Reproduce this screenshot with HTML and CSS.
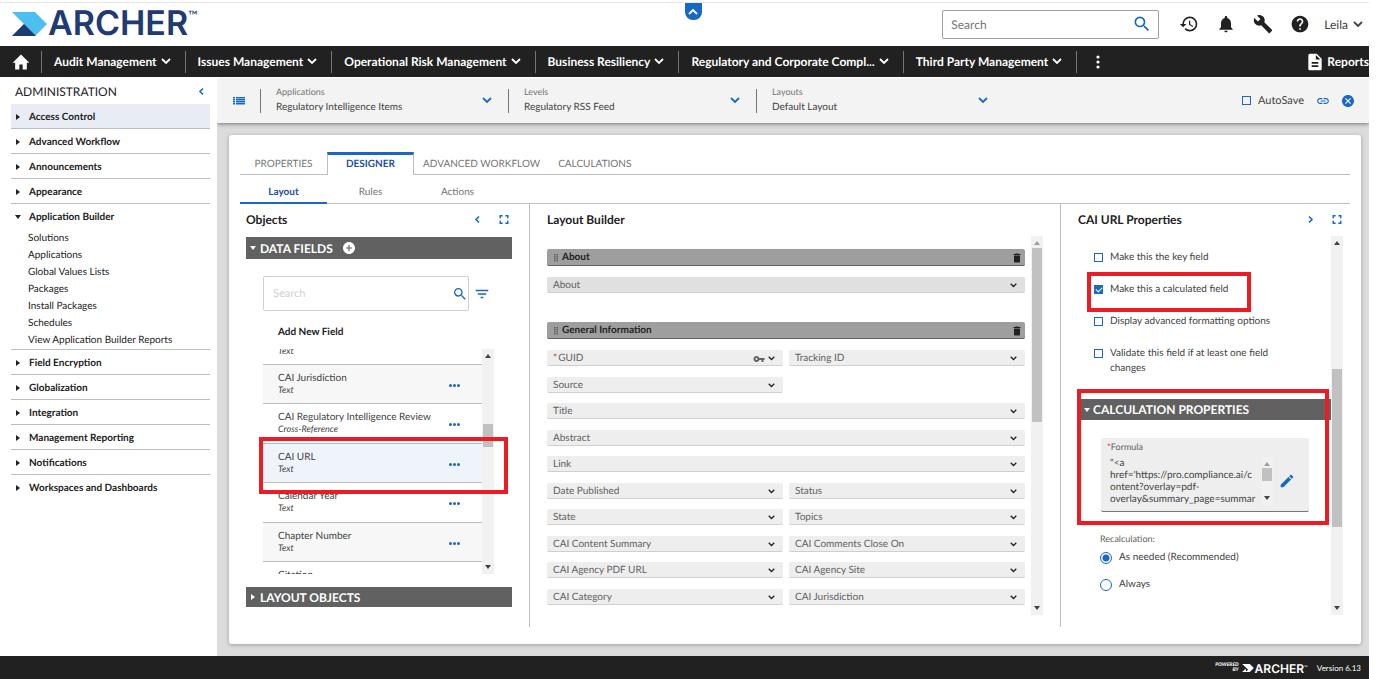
FILE: index.html
```html
<!DOCTYPE html>
<html lang="en">

<head>
    <meta charset="UTF-8">
    <meta name="viewport" content="width=device-width, initial-scale=1.0">
    <title>Archer - Application Builder</title>
    <link rel="stylesheet" href="styles.css">
</head>

<body>
    <!-- Icons -->
    <svg class="sprite" aria-hidden="true">
        <symbol id="home" viewBox="0 0 24 24"><path d="M10 21v-6h4v6h5v-8h3L12 3 2 13h3v8z"/></symbol>
        <symbol id="search" viewBox="0 0 24 24"><path d="M15.5 14h-.79l-.28-.27A6.471 6.471 0 0 0 16 9.5 6.5 6.5 0 1 0 9.5 16c1.61 0 3.09-.59 4.23-1.57l.27.28v.79l5 4.99L20.49 19l-4.99-5zm-6 0C7.01 14 5 11.99 5 9.5S7.01 5 9.5 5 14 7.01 14 9.5 11.99 14 9.5 14z"/></symbol>
        <symbol id="history" viewBox="0 0 24 24"><path d="M13 3a9 9 0 0 0-9 9H1l3.89 3.89.07.14L9 12H6c0-3.87 3.13-7 7-7s7 3.13 7 7-3.13 7-7 7c-1.93 0-3.68-.79-4.94-2.06l-1.42 1.42A8.954 8.954 0 0 0 13 21a9 9 0 0 0 0-18zm-1 5v5l4.28 2.54.72-1.21-3.5-2.08V8H12z"/></symbol>
        <symbol id="bell" viewBox="0 0 24 24"><path d="M12 22c1.1 0 2-.9 2-2h-4c0 1.1.89 2 2 2zm6-6v-5c0-3.07-1.64-5.64-4.5-6.32V4c0-.83-.67-1.5-1.5-1.5s-1.5.67-1.5 1.5v.68C7.63 5.36 6 7.92 6 11v5l-2 2v1h16v-1l-2-2z"/></symbol>
        <symbol id="wrench" viewBox="0 0 24 24"><path d="M22.7 19l-9.1-9.1c.9-2.3.4-5-1.5-6.9-2-2-5-2.4-7.4-1.3L9 6 6 9 1.6 4.7C.4 7.1.9 10.1 2.9 12.1c1.9 1.9 4.6 2.4 6.9 1.5l9.1 9.1c.4.4 1 .4 1.4 0l2.3-2.3c.5-.4.5-1.1.1-1.4z"/></symbol>
        <symbol id="help" viewBox="0 0 24 24"><path d="M12 2C6.48 2 2 6.48 2 12s4.48 10 10 10 10-4.48 10-10S17.52 2 12 2zm1 17h-2v-2h2v2zm2.07-7.75l-.9.92C13.45 12.9 13 13.5 13 15h-2v-.5c0-1.1.45-2.1 1.17-2.83l1.24-1.26c.37-.36.59-.86.59-1.41 0-1.1-.9-2-2-2s-2 .9-2 2H8c0-2.21 1.79-4 4-4s4 1.79 4 4c0 .88-.36 1.68-.93 2.25z"/></symbol>
        <symbol id="report" viewBox="0 0 24 24"><path d="M14 2H6c-1.1 0-1.99.9-1.99 2L4 20c0 1.1.89 2 1.99 2H18c1.1 0 2-.9 2-2V8l-6-6zm2 16H8v-2h8v2zm0-4H8v-2h8v2zm-3-5V3.5L18.5 9H13z"/></symbol>
        <symbol id="link" viewBox="0 0 24 24"><path d="M3.9 12c0-1.71 1.39-3.1 3.1-3.1h4V7H7c-2.76 0-5 2.24-5 5s2.24 5 5 5h4v-1.9H7c-1.71 0-3.1-1.39-3.1-3.1zM8 13h8v-2H8v2zm9-6h-4v1.9h4c1.71 0 3.1 1.39 3.1 3.1s-1.39 3.1-3.1 3.1h-4V17h4c2.76 0 5-2.24 5-5s-2.24-5-5-5z"/></symbol>
        <symbol id="close" viewBox="2 2 20 20"><path d="M12 2C6.47 2 2 6.47 2 12s4.47 10 10 10 10-4.47 10-10S17.53 2 12 2zm5 13.59L15.59 17 12 13.41 8.41 17 7 15.59 10.59 12 7 8.41 8.41 7 12 10.59 15.59 7 17 8.41 13.41 12 17 15.59z"/></symbol>
        <symbol id="add" viewBox="2 2 20 20"><path d="M12 2C6.48 2 2 6.48 2 12s4.48 10 10 10 10-4.48 10-10S17.52 2 12 2zm5 11h-4v4h-2v-4H7v-2h4V7h2v4h4v2z"/></symbol>
        <symbol id="key" viewBox="0 0 24 24"><path d="M12.65 10C11.83 7.67 9.61 6 7 6c-3.31 0-6 2.69-6 6s2.69 6 6 6c2.61 0 4.83-1.67 5.65-4H17v4h4v-4h2v-4H12.65zM7 14c-1.1 0-2-.9-2-2s.9-2 2-2 2 .9 2 2-.9 2-2 2z"/></symbol>
        <symbol id="trash" viewBox="4 2 16 20"><path d="M6 19c0 1.1.9 2 2 2h8c1.1 0 2-.9 2-2V7H6v12zM19 4h-3.5l-1-1h-5l-1 1H5v2h14V4z"/></symbol>
        <symbol id="edit" viewBox="2 2 20 20"><path d="M3 17.25V21h3.75L17.81 9.94l-3.75-3.75L3 17.25zM20.71 7.04c.39-.39.39-1.02 0-1.41l-2.34-2.34c-.39-.39-1.02-.39-1.41 0l-1.83 1.83 3.75 3.75 1.83-1.83z"/></symbol>
        <symbol id="filter" viewBox="2 2 20 20"><path d="M10 18h4v-2h-4v2zM3 6v2h18V6H3zm3 7h12v-2H6v2z"/></symbol>
        <symbol id="list" viewBox="0 0 12 9"><path d="M0 1h2v1.400H0zM3 1h9v1.400H3zM0 3h2v1.400H0zM3 3h9v1.400H3zM0 5h2v1.400H0zM3 5h9v1.400H3zM0 7h2v1.400H0zM3 7h9v1.400H3z"/></symbol>
        <symbol id="expand" viewBox="0 0 10 10"><path d="M0 0h3.500v1.600H1.600v1.900H0zM6.500 0H10v3.500H8.400V1.600H6.500zM0 6.500h1.600v1.900h1.900V10H0zM8.400 6.500H10V10H6.500V8.400h1.900z"/></symbol>
        <symbol id="down" viewBox="0 0 10 7"><path d="M1 1l4 4 4-4" fill="none" stroke="currentColor" stroke-width="1.800"/></symbol>
        <symbol id="up" viewBox="0 0 10 7"><path d="M1 6l4-4 4 4" fill="none" stroke="currentColor" stroke-width="1.800"/></symbol>
        <symbol id="left" viewBox="0 0 7 10"><path d="M5 2L2 5l3 3" fill="none" stroke="currentColor" stroke-width="1.600"/></symbol>
        <symbol id="right" viewBox="0 0 7 10"><path d="M2 2l3 3-3 3" fill="none" stroke="currentColor" stroke-width="1.600"/></symbol>
        <symbol id="tri-right" viewBox="0 0 4 6"><path d="M0 0l4 3-4 3z"/></symbol>
        <symbol id="tri-down" viewBox="0 0 6 4"><path d="M0 0h6L3 4z"/></symbol>
        <symbol id="tri-up" viewBox="0 0 6 4"><path d="M0 4h6L3 0z"/></symbol>
        <symbol id="dots" viewBox="0 0 11 3"><circle cx="1.500" cy="1.500" r="1.500"/><circle cx="5.500" cy="1.500" r="1.500"/><circle cx="9.500" cy="1.500" r="1.500"/></symbol>
        <symbol id="more" viewBox="0 0 4 14"><circle cx="2" cy="2" r="1.600"/><circle cx="2" cy="7" r="1.600"/><circle cx="2" cy="12" r="1.600"/></symbol>
        <symbol id="grip" viewBox="0 0 4 8"><path d="M0 0h1.500v1.500H0zM2.500 0H4v1.500H2.500zM0 2h1.500v1.500H0zM2.500 2H4v1.500H2.500zM0 4h1.500v1.500H0zM2.500 4H4v1.500H2.500zM0 6h1.500v1.500H0zM2.500 6H4v1.500H2.500z"/></symbol>
    </svg>

    <div class="app">
        <header class="header">
            <a href="#" class="logo" aria-label="Archer">
                <svg class="logo-mark" viewBox="0 0 35 24">
                    <path d="M0 0h23l12 12-12 12H0l12-12z" fill="#4dbfee"/>
                    <path d="M0 24l12-12 12 12z" fill="#203a72"/>
                </svg>
                <span class="logo-text">ARCHER</span><span class="logo-tm">™</span>
            </a>
            <button class="collapse-tab" aria-label="Collapse header"><svg class="chev"><use href="#up"/></svg></button>
            <div class="header-search">
                <input type="text" placeholder="Search" aria-label="Search">
                <button aria-label="Run search"><svg class="icon-20"><use href="#search"/></svg></button>
            </div>
            <div class="header-tools">
                <button aria-label="History"><svg class="icon-20"><use href="#history"/></svg></button>
                <button aria-label="Notifications"><svg class="icon-20"><use href="#bell"/></svg></button>
                <button aria-label="Administration"><svg class="icon-20"><use href="#wrench"/></svg></button>
                <button aria-label="Help"><svg class="icon-20"><use href="#help"/></svg></button>
            </div>
            <button class="user">Leila <svg class="chev"><use href="#down"/></svg></button>
        </header>

        <nav class="nav">
            <a href="#" class="nav-home" aria-label="Home"><svg class="icon-20"><use href="#home"/></svg></a>
            <button class="nav-item">Audit Management <svg class="chev"><use href="#down"/></svg></button>
            <button class="nav-item">Issues Management <svg class="chev"><use href="#down"/></svg></button>
            <button class="nav-item">Operational Risk Management <svg class="chev"><use href="#down"/></svg></button>
            <button class="nav-item">Business Resiliency <svg class="chev"><use href="#down"/></svg></button>
            <button class="nav-item">Regulatory and Corporate Compl... <svg class="chev"><use href="#down"/></svg></button>
            <button class="nav-item">Third Party Management <svg class="chev"><use href="#down"/></svg></button>
            <button class="nav-more" aria-label="More"><svg class="more"><use href="#more"/></svg></button>
            <a href="#" class="nav-reports"><svg class="icon-20"><use href="#report"/></svg>Reports</a>
        </nav>

        <div class="body">
            <aside class="sidebar">
                <div class="sidebar-title">
                    <span>ADMINISTRATION</span>
                    <button aria-label="Collapse menu"><svg class="side-chev"><use href="#left"/></svg></button>
                </div>
                <ul class="menu">
                    <li class="active"><a href="#"><svg><use href="#tri-right"/></svg>Access Control</a></li>
                    <li><a href="#"><svg><use href="#tri-right"/></svg>Advanced Workflow</a></li>
                    <li><a href="#"><svg><use href="#tri-right"/></svg>Announcements</a></li>
                    <li><a href="#"><svg><use href="#tri-right"/></svg>Appearance</a></li>
                    <li>
                        <a href="#"><svg><use href="#tri-down"/></svg>Application Builder</a>
                        <ul class="submenu">
                            <li><a href="#">Solutions</a></li>
                            <li><a href="#">Applications</a></li>
                            <li><a href="#">Global Values Lists</a></li>
                            <li><a href="#">Packages</a></li>
                            <li><a href="#">Install Packages</a></li>
                            <li><a href="#">Schedules</a></li>
                            <li><a href="#">View Application Builder Reports</a></li>
                        </ul>
                    </li>
                    <li><a href="#"><svg><use href="#tri-right"/></svg>Field Encryption</a></li>
                    <li><a href="#"><svg><use href="#tri-right"/></svg>Globalization</a></li>
                    <li><a href="#"><svg><use href="#tri-right"/></svg>Integration</a></li>
                    <li><a href="#"><svg><use href="#tri-right"/></svg>Management Reporting</a></li>
                    <li><a href="#"><svg><use href="#tri-right"/></svg>Notifications</a></li>
                    <li><a href="#"><svg><use href="#tri-right"/></svg>Workspaces and Dashboards</a></li>
                </ul>
            </aside>

            <main class="main">
                <div class="toolbar">
                    <button class="toolbar-list" aria-label="List"><svg class="list-icon"><use href="#list"/></svg></button>
                    <div class="picker">
                        <label for="applications">Applications</label>
                        <select id="applications"><option>Regulatory Intelligence Items</option></select>
                        <svg class="chev"><use href="#down"/></svg>
                    </div>
                    <div class="picker">
                        <label for="levels">Levels</label>
                        <select id="levels"><option>Regulatory RSS Feed</option></select>
                        <svg class="chev"><use href="#down"/></svg>
                    </div>
                    <div class="picker">
                        <label for="layouts">Layouts</label>
                        <select id="layouts"><option>Default Layout</option></select>
                        <svg class="chev"><use href="#down"/></svg>
                    </div>
                    <div class="toolbar-right">
                        <label class="autosave"><input type="checkbox">AutoSave</label>
                        <button aria-label="Copy link"><svg class="icon-14"><use href="#link"/></svg></button>
                        <button aria-label="Close"><svg class="icon-12"><use href="#close"/></svg></button>
                    </div>
                </div>

                <div class="card">
                    <div class="tabs">
                        <button>PROPERTIES</button>
                        <button class="selected">DESIGNER</button>
                        <button class="wide">ADVANCED WORKFLOW</button>
                        <button class="wide">CALCULATIONS</button>
                    </div>
                    <div class="subtabs">
                        <button class="selected">Layout</button>
                        <button>Rules</button>
                        <button>Actions</button>
                    </div>

                    <div class="columns">
                        <!-- Objects -->
                        <section class="objects">
                            <div class="panel-title">
                                <h2>Objects</h2>
                                <button aria-label="Collapse"><svg class="side-chev"><use href="#left"/></svg></button>
                                <button aria-label="Full screen"><svg class="expand"><use href="#expand"/></svg></button>
                            </div>
                            <div class="group-bar">
                                <svg class="tri-down"><use href="#tri-down"/></svg>DATA FIELDS
                                <button aria-label="Add field"><svg class="icon-12"><use href="#add"/></svg></button>
                            </div>
                            <div class="field-search">
                                <div class="field-search-box">
                                    <input type="text" placeholder="Search" aria-label="Search fields">
                                    <button aria-label="Search fields"><svg class="icon-16"><use href="#search"/></svg></button>
                                </div>
                                <button aria-label="Filter"><svg class="icon-14"><use href="#filter"/></svg></button>
                            </div>
                            <div class="add-field">Add New Field</div>
                            <div class="field-area">
                                <div class="field-window">
                                    <ul class="field-list">
                                        <li class="cut"><i>Text</i></li>
                                        <li class="odd"><div><b>CAI Jurisdiction</b><i>Text</i></div><button aria-label="Options"><svg class="dots"><use href="#dots"/></svg></button></li>
                                        <li><div><b>CAI Regulatory Intelligence Review</b><i>Cross-Reference</i></div><button aria-label="Options"><svg class="dots"><use href="#dots"/></svg></button></li>
                                        <li class="current"><div><b>CAI URL</b><i>Text</i></div><button aria-label="Options"><svg class="dots"><use href="#dots"/></svg></button></li>
                                        <li><div><b>Calendar Year</b><i>Text</i></div><button aria-label="Options"><svg class="dots"><use href="#dots"/></svg></button></li>
                                        <li class="odd"><div><b>Chapter Number</b><i>Text</i></div><button aria-label="Options"><svg class="dots"><use href="#dots"/></svg></button></li>
                                        <li><div><b>Citation</b></div></li>
                                    </ul>
                                </div>
                                <div class="scrollbar scroll-fields">
                                    <svg><use href="#tri-up"/></svg>
                                    <span class="thumb"></span>
                                    <svg><use href="#tri-down"/></svg>
                                </div>
                                <span class="mark mark-field"></span>
                            </div>
                            <div class="group-bar group-closed">
                                <svg class="tri-right"><use href="#tri-right"/></svg>LAYOUT OBJECTS
                            </div>
                        </section>

                        <!-- Layout Builder -->
                        <section class="builder">
                            <div class="panel-title"><h2>Layout Builder</h2></div>
                            <div class="builder-area">
                                <div class="builder-list">
                                    <div class="section-bar"><svg class="grip"><use href="#grip"/></svg>About<button aria-label="Delete section"><svg class="trash"><use href="#trash"/></svg></button></div>
                                    <div class="cells about-cells">
                                        <div class="cell full dark">About<button aria-label="Menu"><svg><use href="#down"/></svg></button></div>
                                    </div>
                                    <div class="section-bar"><svg class="grip"><use href="#grip"/></svg>General Information<button aria-label="Delete section"><svg class="trash"><use href="#trash"/></svg></button></div>
                                    <div class="cells general-cells">
                                        <div class="cell"><em>*</em>GUID<svg class="key"><use href="#key"/></svg><button aria-label="Menu"><svg><use href="#down"/></svg></button></div>
                                        <div class="cell">Tracking ID<button aria-label="Menu"><svg><use href="#down"/></svg></button></div>
                                        <div class="cell">Source<button aria-label="Menu"><svg><use href="#down"/></svg></button></div>
                                        <div class="cell full">Title<button aria-label="Menu"><svg><use href="#down"/></svg></button></div>
                                        <div class="cell full">Abstract<button aria-label="Menu"><svg><use href="#down"/></svg></button></div>
                                        <div class="cell full">Link<button aria-label="Menu"><svg><use href="#down"/></svg></button></div>
                                        <div class="cell">Date Published<button aria-label="Menu"><svg><use href="#down"/></svg></button></div>
                                        <div class="cell">Status<button aria-label="Menu"><svg><use href="#down"/></svg></button></div>
                                        <div class="cell">State<button aria-label="Menu"><svg><use href="#down"/></svg></button></div>
                                        <div class="cell">Topics<button aria-label="Menu"><svg><use href="#down"/></svg></button></div>
                                        <div class="cell">CAI Content Summary<button aria-label="Menu"><svg><use href="#down"/></svg></button></div>
                                        <div class="cell">CAI Comments Close On<button aria-label="Menu"><svg><use href="#down"/></svg></button></div>
                                        <div class="cell">CAI Agency PDF URL<button aria-label="Menu"><svg><use href="#down"/></svg></button></div>
                                        <div class="cell">CAI Agency Site<button aria-label="Menu"><svg><use href="#down"/></svg></button></div>
                                        <div class="cell">CAI Category<button aria-label="Menu"><svg><use href="#down"/></svg></button></div>
                                        <div class="cell">CAI Jurisdiction<button aria-label="Menu"><svg><use href="#down"/></svg></button></div>
                                    </div>
                                </div>
                                <div class="scrollbar scroll-builder">
                                    <svg class="off"><use href="#tri-up"/></svg>
                                    <span class="thumb"></span>
                                    <svg><use href="#tri-down"/></svg>
                                </div>
                            </div>
                        </section>

                        <!-- Properties -->
                        <section class="props">
                            <div class="panel-title">
                                <h2>CAI URL Properties</h2>
                                <button aria-label="Collapse"><svg class="side-chev"><use href="#right"/></svg></button>
                                <button aria-label="Full screen"><svg class="expand"><use href="#expand"/></svg></button>
                            </div>
                            <div class="props-area">
                                <div class="props-list">
                                    <div class="checks">
                                        <label><input type="checkbox"><span>Make this the key field</span></label>
                                        <label><input type="checkbox" checked><span>Make this a calculated field</span></label>
                                        <label><input type="checkbox"><span>Display advanced formatting options</span></label>
                                        <label><input type="checkbox"><span>Validate this field if at least one field changes</span></label>
                                        <span class="mark mark-check"></span>
                                    </div>
                                    <div class="calc">
                                        <div class="group-bar"><svg class="tri-down"><use href="#tri-down"/></svg>CALCULATION PROPERTIES</div>
                                        <div class="formula">
                                            <label for="formula"><em>*</em>Formula</label>
                                            <div class="formula-row">
                                                <textarea id="formula" rows="4">"&lt;a
href='https://pro.compliance.ai/c
ontent?overlay=pdf-
overlay&amp;summary_page=summar</textarea>
                                                <div class="scrollbar scroll-formula">
                                                    <svg class="off"><use href="#tri-up"/></svg>
                                                    <span class="thumb"></span>
                                                    <svg><use href="#tri-down"/></svg>
                                                </div>
                                                <button aria-label="Edit formula"><svg class="icon-14"><use href="#edit"/></svg></button>
                                            </div>
                                        </div>
                                        <span class="mark mark-calc"></span>
                                    </div>
                                    <fieldset class="recalc">
                                        <legend>Recalculation:</legend>
                                        <label><input type="radio" name="recalc" checked>As needed (Recommended)</label>
                                        <label><input type="radio" name="recalc">Always</label>
                                    </fieldset>
                                </div>
                                <div class="scrollbar scroll-props">
                                    <svg><use href="#tri-up"/></svg>
                                    <span class="thumb"></span>
                                    <svg><use href="#tri-down"/></svg>
                                </div>
                            </div>
                        </section>
                    </div>
                </div>
            </main>
        </div>

        <footer class="footer">
            <span class="powered">POWERED<br>BY</span>
            <svg class="footer-mark" viewBox="0 0 35 24"><path d="M0 0h23l12 12-12 12H10l8-7z" fill="#fff"/><path d="M0 24l10-10 3 10z" fill="#fff"/></svg>
            <span class="footer-logo">ARCHER</span><span class="footer-tm">™</span>
            <span class="version">Version 6.13</span>
        </footer>
    </div>
</body>

</html>
```

FILE: styles.css
```css
* {
    box-sizing: border-box;
}

body {
    margin: 0;
    background: #fff;
    color: #424242;
    font-family: Lato, "Liberation Sans", sans-serif;
    font-size: 10px;
    line-height: 15px;
    text-rendering: geometricPrecision;
}

button,
input,
select,
textarea {
    font: inherit;
    color: inherit;
    text-rendering: inherit;
    margin: 0;
    padding: 0;
    border: none;
    background: none;
}

button {
    cursor: pointer;
    display: flex;
    align-items: center;
}

a {
    color: inherit;
    text-decoration: none;
}

ul {
    list-style: none;
    margin: 0;
    padding: 0;
}

em {
    font-style: normal;
    color: #d32f2f;
}

svg {
    fill: currentColor;
    display: block;
    flex: none;
}

.sprite {
    position: absolute;
    width: 0;
    height: 0;
}

/* icon sizes */
.icon-20 {
    width: 20px;
    height: 20px;
}

.icon-16 {
    width: 16px;
    height: 16px;
}

.icon-14 {
    width: 14px;
    height: 14px;
}

.icon-12 {
    width: 12px;
    height: 12px;
}

.chev {
    width: 10px;
    height: 7px;
}

.side-chev {
    width: 7px;
    height: 11px;
}

.app {
    margin-right: 7px;
    min-height: 100vh;
    display: flex;
    flex-direction: column;
}

/* header */
.header {
    position: relative;
    height: 46px;
    padding: 2px 6px 0 12px;
    display: flex;
    align-items: center;
    box-shadow: inset 0 2px #fff, inset 0 3px #e8e8e8;
}

.logo {
    display: flex;
    align-items: center;
    color: #203a72;
    margin-right: auto;
}

.logo-mark {
    width: 35px;
    height: 24px;
}

.logo-text {
    font-family: Inter, sans-serif;
    font-size: 34px;
    font-weight: 600;
    line-height: 32px;
    margin-left: 1px;
}

.logo-tm {
    font-size: 13px;
    align-self: flex-start;
}

.collapse-tab {
    position: absolute;
    top: 3px;
    left: 50%;
    width: 17px;
    height: 17px;
    justify-content: center;
    background: #1769c4;
    color: #fff;
    border-radius: 0 0 8px 8px;
}

.header-search {
    display: flex;
    align-items: center;
    width: 217px;
    height: 29px;
    padding: 0 6px 0 8px;
    border: 1px solid #9e9e9e;
    border-radius: 2px;
}

.header-search input {
    flex: 1;
    min-width: 0;
    font-size: 12px;
}

.header-search input::placeholder {
    color: #757575;
}

.header-search button {
    color: #1769c4;
}

.header-tools {
    display: flex;
    gap: 17px;
    margin: 0 14px 0 20px;
    color: #212121;
}

.user {
    gap: 5px;
    font-size: 12px;
}

/* nav */
.nav {
    height: 31px;
    margin-bottom: 1px;
    display: flex;
    align-items: center;
    background: #212121;
    color: #fff;
    font-size: 12px;
    font-weight: 700;
}

.nav-home {
    padding: 0 10px 0 11px;
}

.nav-item {
    height: 22px;
    padding: 0 14px 0 12px;
    gap: 4px;
    border-left: 1px solid #757575;
    white-space: nowrap;
}

.nav-more {
    height: 22px;
    padding-left: 19px;
    border-left: 1px solid #757575;
}

.more {
    width: 4px;
    height: 14px;
}

.nav-reports {
    display: flex;
    align-items: center;
    gap: 2px;
    margin-left: auto;
}

.body {
    flex: 1;
    display: flex;
}

/* sidebar */
.sidebar {
    width: 217px;
    padding: 0 7px 0 11px;
    color: #212121;
}

.sidebar-title {
    display: flex;
    align-items: center;
    justify-content: space-between;
    height: 26px;
    padding: 0 5px 0 4px;
    font-size: 12px;
}

.sidebar-title button {
    color: #1769c4;
}

.menu > li {
    border-bottom: 1px solid #bdbdbd;
}

.menu > li:last-child {
    border-bottom: none;
}

.menu > li > a {
    display: flex;
    align-items: center;
    height: 24px;
    padding-top: 2px;
    font-weight: 700;
}

.menu > li > a svg {
    width: 6px;
    height: 6px;
    margin: 0 8px 0 4px;
}

.menu .active {
    background: #e8edf5;
}

.submenu {
    padding: 2px 0 0 17px;
}

.submenu a {
    display: block;
    line-height: 17px;
}

/* main area */
.main {
    flex: 1;
    min-width: 0;
    display: flex;
    flex-direction: column;
    background: #dcdcdc;
}

.toolbar {
    height: 45px;
    display: flex;
    align-items: center;
    background: #f3f3f3;
    box-shadow: 0 1px 4px #757575;
    clip-path: inset(0 0 -8px 0);
}

.toolbar-list {
    padding: 0 15px 0 16px;
    color: #1769c4;
}

.list-icon {
    width: 12px;
    height: 9px;
}

.picker {
    display: grid;
    grid-template-columns: 1fr auto;
    align-items: center;
    row-gap: 6px;
    width: 248px;
    height: 24px;
    padding: 0 16px 0 15px;
    border-left: 1px solid #757575;
}

.picker label {
    font-size: 9px;
    line-height: 6px;
    color: #757575;
}

.picker select {
    grid-row: 2;
    appearance: none;
    line-height: 12px;
}

.picker .chev {
    grid-column: 2;
    grid-row: 1 / 3;
    color: #1769c4;
}

.toolbar-right {
    display: flex;
    align-items: center;
    gap: 12px;
    margin-left: auto;
    padding-right: 15px;
    color: #1769c4;
}

.autosave {
    display: flex;
    align-items: center;
    gap: 7px;
    font-size: 11px;
    color: #424242;
}

input[type="checkbox"] {
    appearance: none;
    flex: none;
    width: 9px;
    height: 9px;
    border: 1px solid #1769c4;
}

input[type="checkbox"]:checked {
    display: flex;
    justify-content: center;
    background: #1769c4;
}

input[type="checkbox"]:checked::before {
    content: "";
    width: 3px;
    height: 5px;
    border: solid #fff;
    border-width: 0 1px 1px 0;
    transform: rotate(45deg);
}

.card {
    flex: 1;
    margin: 12px 8px 12px 12px;
    padding: 17px 11px;
    background: #fff;
    border-radius: 3px;
    box-shadow: 0 1px 4px #9e9e9e;
}

/* tabs */
.tabs {
    display: flex;
    height: 23px;
    color: #757575;
    box-shadow: inset 0 -1px #bdbdbd;
}

.tabs button {
    width: 87px;
    padding-top: 2px;
    justify-content: center;
}

.tabs .selected {
    padding: 0 0 1px;
    border: 1px solid #bdbdbd;
    border-top: 3px solid #1769c4;
    border-bottom: none;
    background: #fff;
    color: #1d4fa0;
    font-weight: 700;
}

.tabs .wide {
    width: auto;
    padding: 2px 9px 0;
}

.subtabs {
    display: flex;
    height: 29px;
    color: #757575;
    border-bottom: 1px solid #bdbdbd;
}

.subtabs button {
    width: 87px;
    padding-top: 6px;
    justify-content: center;
}

.subtabs .selected {
    margin-bottom: -1px;
    padding-top: 8px;
    border-bottom: 2px solid #1769c4;
    color: #1d4fa0;
    font-weight: 700;
}

/* columns */
.columns {
    display: flex;
}

.objects,
.props {
    width: 289px;
    flex: none;
}

.objects {
    padding: 0 17px 0 6px;
}

.builder {
    flex: 1;
    min-width: 0;
    padding: 0 17px;
    border: solid #bdbdbd;
    border-width: 0 1px;
    min-height: 423px;
}

.props {
    padding: 0 7px 0 17px;
}

.panel-title {
    display: flex;
    align-items: center;
    height: 31px;
    margin-bottom: 1px;
    gap: 18px;
}

.panel-title h2 {
    flex: 1;
    margin: 0;
    font-size: 12px;
    font-weight: 700;
    color: #212121;
}

.panel-title button {
    color: #1769c4;
}

.objects .panel-title {
    margin-bottom: 2px;
    padding-right: 3px;
}

.props .panel-title {
    padding-right: 1px;
}

.expand {
    width: 10px;
    height: 9px;
}

.group-bar {
    display: flex;
    align-items: center;
    gap: 4px;
    height: 22px;
    padding-left: 4px;
    background: #616161;
    color: #fff;
    font-size: 12px;
    font-weight: 700;
}

.group-bar button {
    margin-left: 6px;
}

.tri-down {
    width: 6px;
    height: 4px;
}

.tri-right {
    width: 6px;
    height: 6px;
}

.group-closed {
    height: 20px;
    margin-top: 13px;
}

.field-search {
    display: flex;
    align-items: center;
    gap: 6px;
    margin: 17px 0 0 17px;
    color: #1769c4;
}

.field-search-box {
    display: flex;
    align-items: center;
    width: 206px;
    height: 35px;
    padding: 0 0 0 9px;
    border: 1px solid #cfcfcf;
    border-radius: 2px;
}

.field-search input {
    flex: 1;
    min-width: 0;
    font-size: 11px;
}

.field-search input::placeholder {
    color: #d0d0d0;
}

.add-field {
    padding: 14px 0 9px 32px;
    color: #212121;
    font-weight: 700;
}

/* field list */
.field-area {
    position: relative;
    display: flex;
    height: 225px;
    margin: 0 18px 0 17px;
}

.field-window {
    flex: 1;
    overflow: hidden;
}

.field-list li {
    display: flex;
    justify-content: space-between;
    height: 40px;
    padding: 0 22px 0 15px;
    border-bottom: 1px solid #bdbdbd;
}

.field-list li:nth-child(even) {
    height: 39px;
}

.field-list .cut {
    height: 16px;
}

.field-list .cut i {
    margin-top: -3px;
}

.field-list div {
    padding-top: 6px;
}

.field-list b {
    display: block;
    font-weight: 400;
    line-height: 14px;
    white-space: nowrap;
}

.field-list i {
    display: block;
    font-size: 9px;
    line-height: 10px;
}

.field-list button {
    padding-top: 2px;
    color: #1769c4;
}

.field-list .odd {
    background: #f7f7f7;
}

.field-list .current {
    background: #eff4fb;
}

.dots {
    width: 11px;
    height: 3px;
}

/* scrollbars */
.scrollbar {
    display: flex;
    flex-direction: column;
    align-items: center;
    width: 12px;
    padding: 5px 1px;
    background: #f1f1f1;
    color: #424242;
}

.scrollbar svg {
    width: 6px;
    height: 4px;
}

.scrollbar .off {
    color: #9e9e9e;
}

.scrollbar svg:last-child {
    margin-top: auto;
}

.thumb {
    width: 10px;
    background: #c1c1c1;
}

.scroll-fields .thumb {
    height: 23px;
    margin-top: 66px;
}

.scroll-builder .thumb {
    height: 174px;
    margin-top: 3px;
}

.scroll-props .thumb {
    height: 158px;
    margin-top: 124px;
}

.scroll-formula .thumb {
    height: 13px;
    margin-top: 2px;
}

/* layout builder */
.builder-area {
    display: flex;
    gap: 6px;
    height: 379px;
}

.builder-list {
    flex: 1;
    padding-top: 13px;
}

.section-bar,
.cell {
    display: flex;
    align-items: center;
    height: 16px;
    padding: 2px 8px 0 6px;
    border-radius: 2px;
}

.section-bar {
    height: 17px;
    padding: 1px 4px 0 7px;
    gap: 4px;
    background: #9e9e9e;
    border-bottom: 1px solid #616161;
    color: #212121;
    font-weight: 700;
}

.section-bar button,
.cell button {
    margin-left: auto;
}

.grip {
    width: 4px;
    height: 8px;
    color: #616161;
}

.trash {
    width: 8px;
    height: 10px;
}

.cells {
    display: grid;
    grid-template-columns: 1fr 1fr;
    column-gap: 6px;
    align-content: space-between;
}

.about-cells {
    padding: 11px 0 29px;
}

.general-cells {
    height: 266px;
    padding-top: 11px;
}

.cell {
    background: #eee;
    border-bottom: 1px solid #cfcfcf;
    color: #616161;
}

.cell svg {
    width: 7px;
    height: 5px;
    color: #212121;
}

.cell .key {
    width: 12px;
    height: 12px;
    margin-left: auto;
    color: #616161;
}

.cell .key + button {
    margin-left: 3px;
}

.cell em {
    margin-right: 1px;
}

.full {
    grid-column: 1 / 3;
}

.dark {
    background: #e0e0e0;
}

/* properties */
.props-area {
    display: flex;
    height: 379px;
}

.props-list {
    flex: 1;
}

.checks {
    position: relative;
    display: flex;
    flex-direction: column;
    gap: 17px;
    height: 163px;
    padding: 14px 56px 0 16px;
}

.checks label {
    display: flex;
    gap: 7px;
}

.checks input {
    margin-top: 3px;
}

.calc {
    position: relative;
}

.calc .group-bar {
    gap: 3px;
    height: 21px;
    margin-left: 2px;
}

.formula {
    margin: 18px 22px 0 23px;
    padding: 3px 6px 6px;
    background: #eee;
    border-bottom: 1px solid #757575;
    border-radius: 2px;
}

.formula label {
    display: block;
    font-size: 9px;
    line-height: 12px;
    color: #616161;
}

.formula-row {
    display: flex;
    align-items: center;
    padding: 4px 9px 0 3px;
}

.formula textarea {
    width: 151px;
    height: 48px;
    line-height: 12px;
    resize: none;
    overflow: hidden;
    white-space: pre;
}

.formula-row button {
    margin-left: auto;
    color: #1769c4;
}

.scroll-formula {
    height: 48px;
}

.recalc {
    margin: 0;
    padding: 19px 0 0 22px;
    border: none;
}

.recalc legend {
    float: left;
    width: 100%;
    padding: 0;
    margin-bottom: 4px;
    font-size: 9px;
    color: #616161;
}

.recalc label {
    display: flex;
    align-items: center;
    gap: 7px;
    clear: both;
    margin-bottom: 12px;
}

.recalc input {
    appearance: none;
    width: 12px;
    height: 12px;
    border: 1px solid #1769c4;
    border-radius: 50%;
}

.recalc input:checked {
    background: radial-gradient(circle, #1769c4 3px, transparent 4px);
}

/* red highlight boxes */
.mark {
    position: absolute;
    border: 4px solid #ed1c24;
    pointer-events: none;
}

.mark-field {
    top: 88px;
    left: -4px;
    right: -14px;
    height: 57px;
}

.mark-check {
    top: 36px;
    left: 9px;
    right: 80px;
    height: 40px;
}

.mark-calc {
    top: -10px;
    left: -1px;
    right: 2px;
    height: 136px;
}

/* footer */
.footer {
    height: 24px;
    display: flex;
    align-items: center;
    justify-content: flex-end;
    padding-right: 8px;
    background: #212121;
    color: #fff;
}

.powered {
    margin-right: 3px;
    font-size: 5px;
    font-style: italic;
    font-weight: 900;
    line-height: 5px;
    text-align: right;
}

.footer-mark {
    width: 12px;
    height: 8px;
}

.footer-logo {
    font-family: Inter, sans-serif;
    font-size: 12px;
    font-weight: 600;
    margin-left: 1px;
}

.footer-tm {
    font-size: 5px;
    line-height: 11px;
}

.version {
    margin-left: 9px;
    font-size: 8px;
}
```
